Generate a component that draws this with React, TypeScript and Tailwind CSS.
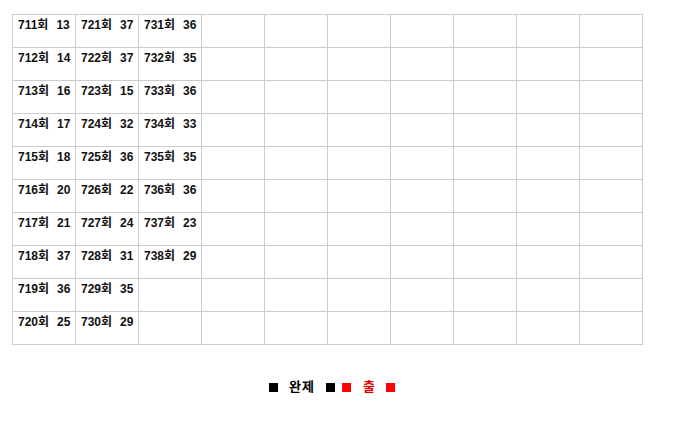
import React from "react";

const cols: [string, string][][] = [
  [["711", "13"], ["712", "14"], ["713", "16"], ["714", "17"], ["715", "18"], ["716", "20"], ["717", "21"], ["718", "37"], ["719", "36"], ["720", "25"]],
  [["721", "37"], ["722", "37"], ["723", "15"], ["724", "32"], ["725", "36"], ["726", "22"], ["727", "24"], ["728", "31"], ["729", "35"], ["730", "29"]],
  [["731", "36"], ["732", "35"], ["733", "36"], ["734", "33"], ["735", "35"], ["736", "36"], ["737", "23"], ["738", "29"]],
];

export default function App() {
  const cells: React.ReactNode[] = [];
  for (let r = 0; r < 10; r++) {
    for (let c = 0; c < 10; c++) {
      const d = cols[c]?.[r];
      cells.push(
        <div key={`${r}-${c}`} className="bg-white h-[32px] pl-[5px] pt-[3px] leading-[14px]">
          {d ? (
            <span>
              {d[0]}회<span className="inline-block w-[8px]" />
              {d[1]}
            </span>
          ) : null}
        </div>
      );
    }
  }
  return (
    <div
      className="w-[677px] h-[424px] bg-white text-[12px] font-bold text-[#111]"
      style={{ fontFamily: '"Liberation Sans", "Noto Sans CJK KR", sans-serif' }}
    >
      <div className="pt-[14px] pl-[12px]">
        <div className="inline-grid grid-cols-[repeat(10,62px)] gap-px p-px bg-[#cccccc]">{cells}</div>
      </div>
      <div className="flex items-center mt-[35px] ml-[269px] h-[14px]">
        <div className="w-[9px] h-[9px] bg-black" />
        <span className="ml-[11px] text-[13px] tracking-[1px] text-black">완제</span>
        <div className="ml-[11px] w-[9px] h-[9px] bg-black" />
        <div className="ml-[7px] w-[9px] h-[9px] bg-[#ff0000]" />
        <span className="ml-[12px] text-[13px] text-[#e00000]">출</span>
        <div className="ml-[11px] w-[9px] h-[9px] bg-[#ff0000]" />
      </div>
    </div>
  );
}
